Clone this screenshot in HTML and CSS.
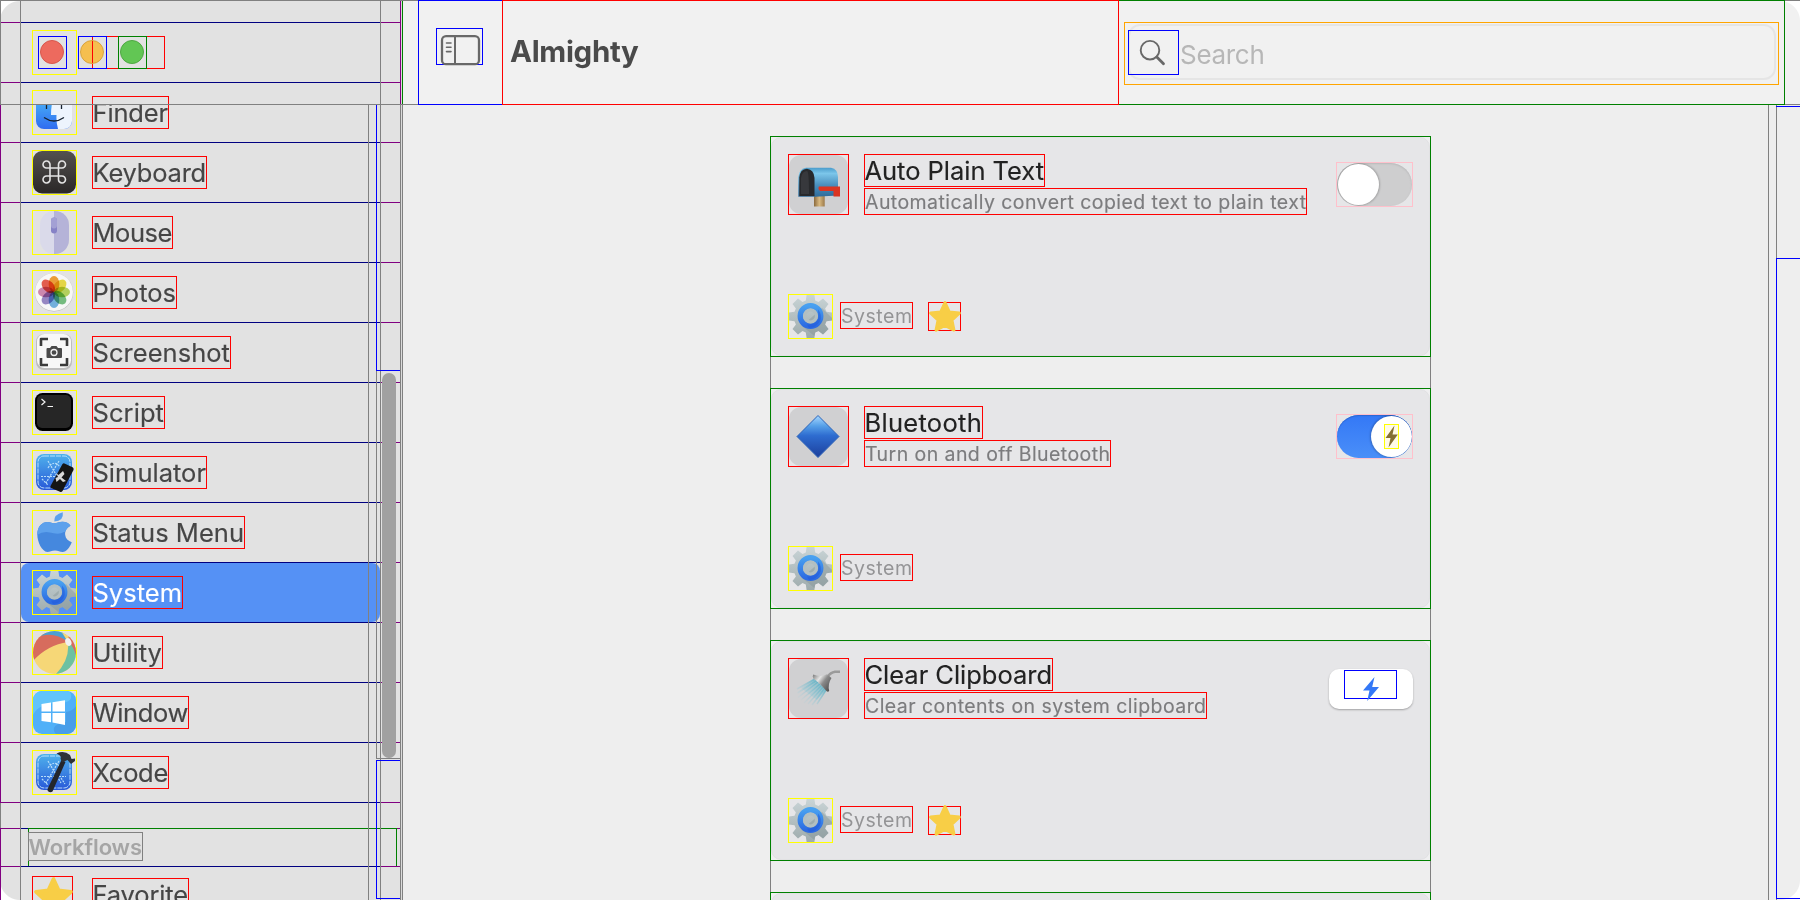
FILE: index.html
```html
<!DOCTYPE html>
<html lang="en">
<head>
<meta charset="utf-8">
<title>Almighty</title>
<link rel="stylesheet" href="styles.css">
</head>
<body>
<svg class="defs" width="0" height="0" aria-hidden="true">
  <defs>
    <linearGradient id="gGear" x1="0" y1="0" x2="0" y2="1"><stop offset="0" stop-color="#c9d4d6"/><stop offset="1" stop-color="#9eabad"/></linearGradient>
    <linearGradient id="gRing" x1="0" y1="0" x2="0" y2="1"><stop offset="0" stop-color="#48a0f0"/><stop offset="1" stop-color="#2c6be2"/></linearGradient>
    <linearGradient id="gBlue" x1="0" y1="0" x2="0" y2="1"><stop offset="0" stop-color="#4fb2ec"/><stop offset="1" stop-color="#2858d8"/></linearGradient>
    <linearGradient id="gFinder" x1="0" y1="0" x2="0" y2="1"><stop offset="0" stop-color="#4fc0f8"/><stop offset="1" stop-color="#2f6cf0"/></linearGradient>
    <linearGradient id="gKey" x1="0" y1="0" x2="0" y2="1"><stop offset="0" stop-color="#53514f"/><stop offset="1" stop-color="#2a2727"/></linearGradient>
    <linearGradient id="gDia" x1="0" y1="0" x2="0" y2="1"><stop offset="0" stop-color="#a8d8ff"/><stop offset=".25" stop-color="#559fe8"/><stop offset=".48" stop-color="#2e6cd0"/><stop offset="1" stop-color="#1c3f9c"/></linearGradient>
    <linearGradient id="gMail" x1="0" y1="0" x2="0" y2="1"><stop offset="0" stop-color="#4b9ccb"/><stop offset=".2" stop-color="#7cc6ea"/><stop offset=".6" stop-color="#4a8fbd"/><stop offset="1" stop-color="#2f6b9a"/></linearGradient>
    <linearGradient id="gPost" x1="0" y1="0" x2="1" y2="0"><stop offset="0" stop-color="#8a693d"/><stop offset=".5" stop-color="#d9b981"/><stop offset="1" stop-color="#9c7a4a"/></linearGradient>
    <linearGradient id="gSpray" gradientUnits="userSpaceOnUse" x1="34" y1="24" x2="15" y2="43"><stop offset="0" stop-color="#5fb1c4"/><stop offset="1" stop-color="#a6cfda" stop-opacity=".15"/></linearGradient>
    <linearGradient id="gMetal" x1="0" y1="0" x2="1" y2=".7"><stop offset="0" stop-color="#777"/><stop offset=".35" stop-color="#e4e4e4"/><stop offset=".6" stop-color="#8a8a8a"/><stop offset="1" stop-color="#555"/></linearGradient>
    <clipPath id="cBall"><circle cx="21.5" cy="21.5" r="21.5"/></clipPath>
    <clipPath id="cWin"><rect width="43" height="43" rx="9"/></clipPath>
    <clipPath id="cFinder"><rect x="3" y="2" width="36" height="36" rx="8"/></clipPath>
    <clipPath id="cMouse"><rect x="7" y="0" width="29" height="43" rx="14"/></clipPath>
    <clipPath id="cApple"><path d="M21.5 12.3C24 12.3 25.500 10.700 29.500 10.700C33 10.700 36 12.200 37.500 14.800C33 17.400 31.800 20.500 32.200 24C32.600 27.500 35 30 38.800 31.300C37 36.200 33.300 41 29.600 41C26.500 41 25.500 39.400 22 39.400C18.500 39.400 17.200 41 14.300 41C9 40.500 4.300 31 4.300 23.500C4.300 15.500 9 10.900 14.500 10.900C17.500 10.900 19.500 12.300 21.500 12.300Z"/></clipPath>

    <symbol id="gear" viewBox="0 0 43 43">
      <path d="M16.800 5.500L17.600 0H25.400L26.200 5.500L29.500 6.900L34 3.500L39.500 9L36.100 13.500L37.500 16.800L43 17.600V25.400L37.500 26.200L36.100 29.500L39.500 34L34 39.500L29.500 36.100L26.200 37.500L25.400 43H17.600L16.800 37.500L13.500 36.100L9 39.500L3.500 34L6.900 29.500L5.500 26.200L0 25.400V17.600L5.500 16.800L6.900 13.500L3.500 9L9 3.500L13.500 6.900Z" fill="url(#gGear)"/>
      <path d="M33 13L43 23V25.400L37.500 26.200L36.100 29.500L39.500 34L34 39.500L29.500 36.100L26.200 37.500L25.400 41L13 31Z" fill="#7f8d90" opacity=".38"/>
      <circle cx="21.500" cy="21" r="10.200" fill="none" stroke="url(#gRing)" stroke-width="5.500"/>
      <path d="M29 14.500Q34 20 30.500 27Q27 32.500 20 33L18 29.500Q27 30 29.300 23Z" fill="#2259da" opacity=".55"/>
      <circle cx="21.500" cy="21" r="6" fill="none" stroke="#b3bfc1" stroke-width="3.200"/>
    </symbol>
    <symbol id="star" viewBox="0 0 38 38">
      <path d="M19 2L24 13L36 14.400L27.200 22.600L29.600 34.500L19 29L8.400 34.500L10.800 22.600L2 14.400L14 13Z" fill="#f8ce46" stroke="#f8ce46" stroke-width="3.600" stroke-linejoin="round"/>
    </symbol>
    <symbol id="bolt" viewBox="0 0 16 24">
      <path d="M11.500 0L0 13.500H6.500L4.200 24L16 10H9.200Z"/>
    </symbol>
    <symbol id="finder" viewBox="0 0 43 43">
      <g clip-path="url(#cFinder)">
        <rect x="3" y="2" width="36" height="36" fill="url(#gFinder)"/>
        <path d="M22 2Q18 12 18 24H23.500Q23 31 25 38H39V2Z" fill="#edf4fd"/>
        <path d="M13.500 12V18M28.500 12V18M11 26.500Q21 33.500 31 26.500" fill="none" stroke="#17222f" stroke-width="1.300"/>
      </g>
    </symbol>
    <symbol id="keyboard" viewBox="0 0 43 43">
      <rect width="43" height="42.500" rx="9" fill="url(#gKey)"/>
      <path d="M17 17H25.500V25H17ZM17 17V13.600A3.500 3.500 0 1 0 13.500 17H17M25.500 17H29A3.500 3.500 0 1 0 25.500 13.600V17M25.500 25V28.400A3.500 3.500 0 1 0 29 25H25.500M17 25H13.500A3.500 3.500 0 1 0 17 28.400V25" fill="none" stroke="#e4e4e4" stroke-width="1.600"/>
    </symbol>
    <symbol id="mouse" viewBox="0 0 43 43">
      <g clip-path="url(#cMouse)"><rect x="7" width="14" height="43" fill="#dadaea"/><rect x="21" width="15" height="43" fill="#b5b3d8"/></g>
      <rect x="18" y="6.500" width="6" height="16" rx="3" fill="#8682c6"/><rect x="18" y="6.500" width="6" height="11" rx="3" fill="#a3a0d4"/>
    </symbol>
    <symbol id="photos" viewBox="0 0 43 43">
      <circle cx="21" cy="21.300" r="19.200" fill="#b8b8b8"/><circle cx="21" cy="21" r="19" fill="#f7f7f7"/>
      <g class="petals">
        <ellipse cx="21" cy="13" rx="5.300" ry="8" fill="#f2a33a"/>
        <ellipse cx="21" cy="13" rx="5.300" ry="8" fill="#ecdc48" transform="rotate(45 21 21)"/>
        <ellipse cx="21" cy="13" rx="5.300" ry="8" fill="#b9d660" transform="rotate(90 21 21)"/>
        <ellipse cx="21" cy="13" rx="5.300" ry="8" fill="#79c183" transform="rotate(135 21 21)"/>
        <ellipse cx="21" cy="13" rx="5.300" ry="8" fill="#77b5e3" transform="rotate(180 21 21)"/>
        <ellipse cx="21" cy="13" rx="5.300" ry="8" fill="#9a8bc9" transform="rotate(225 21 21)"/>
        <ellipse cx="21" cy="13" rx="5.300" ry="8" fill="#d28cb4" transform="rotate(270 21 21)"/>
        <ellipse cx="21" cy="13" rx="5.300" ry="8" fill="#ea6050" transform="rotate(315 21 21)"/>
      </g>
    </symbol>
    <symbol id="screenshot" viewBox="0 0 43 43">
      <rect x="3" y="3" width="36" height="36" rx="8" fill="#bdbdbd"/><rect x="4" y="3" width="34" height="34" rx="7.500" fill="#f7f7f7"/>
      <path d="M8 15V8H15M27 8H34V15M34 27V34H27M15 34H8V27" fill="none" stroke="#3a3a3a" stroke-width="2.600" stroke-linejoin="round"/>
      <path d="M14 17H17L18.500 15H23.500L25 17H28Q29 17 29 18V26Q29 27 28 27H14.500Q13.500 27 13.500 26V18Q13.500 17 14.500 17Z" fill="#4a4a4a"/>
      <circle cx="21" cy="21.500" r="3" fill="none" stroke="#f2f2f2" stroke-width="1.300"/>
    </symbol>
    <symbol id="script" viewBox="0 0 43 43">
      <rect x="2" y="2" width="38" height="38" rx="7.500" fill="#000"/><rect x="4" y="4" width="34" height="33" rx="5" fill="#262626"/>
      <path d="M8.500 8L12 11L8.500 14M14.500 15.500H20" fill="none" stroke="#f4f4f4" stroke-width="1.200"/>
    </symbol>
    <symbol id="blueprint" viewBox="0 0 43 43">
      <rect x="3" y="3" width="36" height="36" rx="8" fill="url(#gBlue)"/>
      <rect x="5" y="5" width="32" height="32" rx="6" fill="none" stroke="#c4e6ff" stroke-width=".9" stroke-dasharray="5 1"/>
      <path d="M15 10L28 32M26 10L13 32M8 25.500H33M15 17Q21 8 27 16M9 28L15 34M28 27L32 33" fill="none" stroke="#b8def9" stroke-width="1.200" stroke-dasharray="2 1"/>
    </symbol>
    <symbol id="simulator" viewBox="0 0 43 43">
      <use href="#blueprint" width="43" height="43"/>
      <path d="M31.500 12.500L40 16.500Q41 17.500 40.500 19L29.500 40Q28.500 41.300 27 40.700L18 37Q17 36 17.500 35L29.500 13Q30.500 12 31.500 12.500Z" fill="#151515"/>
      <path d="M23 22L25.500 24L30 20L31.500 23L28.500 26.500L33 30L30 31L27 28L23.500 31L22.500 27L25 26Z" fill="#d8d8d8"/>
    </symbol>
    <symbol id="apple" viewBox="0 0 43 43">
      <path d="M29.800 1.300Q31 10.300 21.300 10.600Q20.500 3.500 29.800 1.300Z" fill="#5da1ec"/>
      <g clip-path="url(#cApple)"><rect width="43" height="43" fill="#4588de"/><path d="M0 0H43V18Q35 20 31 21Q26 24 17 21.500Q10 20 4 24H0Z" fill="#5da1ec"/></g>
    </symbol>
    <symbol id="ball" viewBox="0 0 43 43">
      <g clip-path="url(#cBall)">
        <rect width="43" height="43" fill="#f6d777"/>
        <path d="M-1 31Q14 14 35 11L26 3L5 1L-2 14Z" fill="#d76c5d"/>
        <path d="M8 5Q22 1 35 11L38 8L28 0H12Z" fill="#4c9fd2"/>
        <path d="M35 11L28 0L40 8Z" fill="#f6d777"/>
        <path d="M35 11Q37 29 22 44H40L46 22L40 12Z" fill="#6dc1a2"/>
        <path d="M35 9Q41 17 43 24L46 12L36 4Z" fill="#d76c5d"/>
      </g>
      <ellipse cx="35.300" cy="11.200" rx="3" ry="4" fill="#f1f1f1" transform="rotate(-22 35 11)"/>
    </symbol>
    <symbol id="window" viewBox="0 0 43 43">
      <g clip-path="url(#cWin)">
        <rect width="43" height="43" fill="#50b0f8"/>
        <path d="M0 0H36Q40 4 37 9Q34 12 25 12Q6 12 0 24Z" fill="#62c4fb"/>
        <path d="M43 15Q40 20 33 21V31Q23 32 21 37Q20 41 24 44H43Z" fill="#489ee9"/>
      </g>
      <path d="M8.500 13L18 11.600V20.500H8.500ZM19.500 11.300L32 9.300V20.500H19.500ZM8.500 22H18V31.300L8.500 30ZM19.500 22H32V34L19.500 31.600Z" fill="#fff"/>
    </symbol>
    <symbol id="xcode" viewBox="0 0 43 43">
      <use href="#blueprint" width="43" height="43"/>
      <path d="M28.500 9L32.500 11L19.500 40.500Q17.500 42 15 40.300Q14 39 15 37Z" fill="#24272c"/>
      <path d="M23.500 2.500Q31 -1 37 4L38.500 8L42 7.500V10L38 13L34.500 9L29 11.500L27.500 7.500Q29 5 23.500 2.500Z" fill="#303337"/>
    </symbol>
    <symbol id="mailbox" viewBox="0 0 59 59">
      <rect x="25" y="40" width="10.700" height="11.500" fill="url(#gPost)"/>
      <path d="M17 12.700H42Q49 14 49 22V40.500L26 41.700H9.300V22Q10 14 17 12.700Z" fill="url(#gMail)"/>
      <path d="M10.300 41V22.500Q11 14 18 13.700Q25 14.500 25.500 23V41Z" fill="#28292c"/>
      <path d="M12 39V23Q13 16 18 16Q20 16 20 39Z" fill="#45474b" opacity=".5"/>
      <path d="M30 31.500H51V41.500H44.500V36H31Q28.500 33.500 30 31.500Z" fill="#da3522"/>
    </symbol>
    <symbol id="diamond" viewBox="0 0 59 59">
      <path d="M29 8.500L50 29.500L29 50.500L8 29.500Z" fill="url(#gDia)" stroke="#2a62b8" stroke-width="1" stroke-linejoin="round"/>
    </symbol>
    <symbol id="shower" viewBox="0 0 59 59">
      <path d="M26 20L8 30M27.500 21.500L8.500 34M29 23L9 38.500M31 25L12 41M32.500 26.500L15 44M34 28L19 45M35.500 29.500L23 46M37 31L28 45" stroke="url(#gSpray)" stroke-width="1.500" fill="none"/>
      <path d="M26 20L37 31L28 41L12 29Z" fill="url(#gSpray)" opacity=".7"/>
      <path d="M51 12.800H46Q41.500 13.500 38.500 18" fill="none" stroke="#9a9a9a" stroke-width="2.600"/>
      <path d="M24.300 15.500Q31 18.500 38 15.300L42.500 19Q38.500 25 40.200 32Q38.500 34 36.500 31Q30 23 24.500 20Q23 17 24.300 15.500Z" fill="url(#gMetal)"/>
    </symbol>
  </defs>
</svg>

<div class="window">
  <aside class="sidebar">
    <ul class="list">
      <li class="row"><span class="icon"></span><span class="label" style="width:73px"></span></li>
      <li class="row row-cut"><span class="icon"><svg><use href="#finder"/></svg></span><span class="label" style="width:77px"><b>Finder</b></span></li>
      <li class="row"><span class="icon"><svg><use href="#keyboard"/></svg></span><span class="label" style="width:115px"><b>Keyboard</b></span></li>
      <li class="row"><span class="icon"><svg><use href="#mouse"/></svg></span><span class="label" style="width:81px"><b>Mouse</b></span></li>
      <li class="row"><span class="icon"><svg><use href="#photos"/></svg></span><span class="label" style="width:85px"><b>Photos</b></span></li>
      <li class="row"><span class="icon"><svg><use href="#screenshot"/></svg></span><span class="label" style="width:139px"><b>Screenshot</b></span></li>
      <li class="row"><span class="icon"><svg><use href="#script"/></svg></span><span class="label" style="width:73px"><b>Script</b></span></li>
      <li class="row"><span class="icon"><svg><use href="#simulator"/></svg></span><span class="label" style="width:115px"><b>Simulator</b></span></li>
      <li class="row"><span class="icon"><svg><use href="#apple"/></svg></span><span class="label" style="width:153px"><b>Status Menu</b></span></li>
      <li class="row row-selected"><span class="icon"><svg><use href="#gear"/></svg></span><span class="label" style="width:91px"><b>System</b></span></li>
      <li class="row"><span class="icon"><svg><use href="#ball"/></svg></span><span class="label" style="width:71px"><b>Utility</b></span></li>
      <li class="row"><span class="icon"><svg><use href="#window"/></svg></span><span class="label" style="width:97px"><b>Window</b></span></li>
      <li class="row"><span class="icon"><svg><use href="#xcode"/></svg></span><span class="label" style="width:77px"><b>Xcode</b></span></li>
      <li class="row row-gap"></li>
      <li class="row row-section"><span class="section"><span class="section-label"><b>Workflows</b></span></span></li>
      <li class="row row-favorite"><span class="icon icon-star"><svg><use href="#star"/></svg></span><span class="label" style="width:97px"><b>Favorite</b></span></li>
    </ul>
    <div class="lights">
      <span class="light light-close"><i></i></span>
      <span class="light light-min"><i></i></span>
      <span class="light light-zoom"><i></i></span>
    </div>
    <div class="corner corner-tl"></div>
    <div class="corner corner-bl"></div>
    <div class="edge"></div>
    <div class="thumb"></div>
    <div class="v v-left"></div>
    <div class="v v-left-gap"></div>
    <div class="v v-inset"></div>
    <div class="v v-clip"></div>
    <div class="v v-track"></div>
    <div class="v v-right"></div>
    <div class="slot slot-top"></div>
    <div class="slot slot-bottom"></div>
    <div class="h h-thumb"></div>
    <div class="h h-head"></div>
  </aside>

  <main class="main">
    <header class="toolbar">
      <div class="tb-side"><span class="tb-icon"><svg width="47" height="40" viewBox="0 0 47 40"><rect x="6" y="8.200" width="37" height="28" rx="4" fill="none" stroke="#686868" stroke-width="2.300"/><path d="M19 8V36" stroke="#686868" stroke-width="2"/><path d="M10.500 15H15M10.500 19.300H15M10.500 23.600H15" stroke="#686868" stroke-width="1.600" stroke-linecap="round"/></svg></span></div>
      <div class="tb-title"><span class="title"><b>Almighty</b></span></div>
      <div class="tb-search">
        <div class="search-box">
          <div class="field"><span class="glass"><svg width="49" height="43" viewBox="0 0 49 43"><circle cx="21" cy="19.200" r="9.300" fill="none" stroke="#686868" stroke-width="1.900"/><path d="M27.800 26L34.500 32.800" stroke="#686868" stroke-width="2.800" stroke-linecap="round"/></svg></span><span class="placeholder"><b>Search</b></span></div>
        </div>
      </div>
      <div class="tb-end"></div>
    </header>
    <div class="content">
      <div class="column">
        <section class="card">
          <div class="card-top">
            <span class="emoji"><svg><use href="#mailbox"/></svg></span>
            <div class="texts"><span class="name" style="width:181px"><b>Auto Plain Text</b></span><span class="desc" style="width:443px"><b>Automatically convert copied text to plain text</b></span></div>
            <span class="switch"><i class="track"><i class="knob"></i></i></span>
          </div>
          <div class="card-foot"><span class="icon"><svg><use href="#gear"/></svg></span><span class="tag"><b>System</b></span><span class="fav"><svg><use href="#star"/></svg></span></div>
        </section>
        <section class="card">
          <div class="card-top">
            <span class="emoji"><svg><use href="#diamond"/></svg></span>
            <div class="texts"><span class="name" style="width:119px"><b>Bluetooth</b></span><span class="desc" style="width:247px"><b>Turn on and off Bluetooth</b></span></div>
            <span class="switch switch-on"><i class="track"><i class="knob"><svg class="knob-bolt" viewBox="0 0 13 23"><path d="M9.500 0.500L0.500 13H5.500L3.500 22.500L12.800 9.500H7.500Z"/></svg></i></i></span>
          </div>
          <div class="card-foot"><span class="icon"><svg><use href="#gear"/></svg></span><span class="tag"><b>System</b></span></div>
        </section>
        <section class="card">
          <div class="card-top">
            <span class="emoji"><svg><use href="#shower"/></svg></span>
            <div class="texts"><span class="name" style="width:189px"><b>Clear Clipboard</b></span><span class="desc" style="width:343px"><b>Clear contents on system clipboard</b></span></div>
            <span class="button"><span class="button-box"><svg><use href="#bolt"/></svg></span></span>
          </div>
          <div class="card-foot"><span class="icon"><svg><use href="#gear"/></svg></span><span class="tag"><b>System</b></span><span class="fav"><svg><use href="#star"/></svg></span></div>
        </section>
        <section class="card"></section>
      </div>
      <div class="corner corner-br"></div>
      <div class="m m-clip"></div>
      <div class="m m-track"></div>
      <div class="mslot mslot-top"></div>
      <div class="mslot mslot-bottom"></div>
    </div>
  </main>
</div>
<script src="fit.js"></script>
</body>
</html>
```
FILE: styles.css
```css
* { box-sizing: border-box; }
body { margin: 0; background: #fff; font-family: Inter, "Liberation Sans", sans-serif; overflow: hidden; }
b, i { font: inherit; font-style: normal; }
b { display: inline-block; white-space: pre; }
svg { display: block; }
.defs { position: absolute; }

.window { display: flex; position: relative; width: 1800px; height: 900px; overflow: hidden; background: #eee; }
.corner { position: absolute; width: 20px; height: 20px; }
.corner-tl { left: 0; top: 1px; background: radial-gradient(circle at 100% 100%, transparent 19.500px, #fff 20.500px); }
.corner-bl { left: 0; bottom: 0; background: radial-gradient(circle at 100% 0, transparent 19.500px, #fff 20.500px); }
.corner-br { right: 0; bottom: 0; background: radial-gradient(circle at 0 0, transparent 19.500px, #fff 20.500px); }

/* Sidebar */
.sidebar { position: relative; width: 403px; height: 900px; flex: none; padding-top: 22px; background: #e2e2e2; overflow: hidden; }
.list { list-style: none; margin: 0; padding: 0; width: 401px; }
.row { display: flex; height: 60px; padding: 8px 0 0 32px;
  background: linear-gradient(to right, #800080 20px, #000080 20px, #000080 380px, #800080 380px) top left / 100% 1px no-repeat; }
.icon { width: 45px; height: 45px; border: 1px solid #ff0; flex: none; }
.icon svg { width: 43px; height: 43px; }
.label { height: 33px; margin: 6px 0 0 15px; border: 1px solid #f00; font-size: 25.500px; line-height: 31px; color: #464646; -webkit-text-stroke: .15px; }
.label b, .name b { margin-left: -.5px; }
.row-cut svg { clip-path: inset(14px 0 0 0); }
.row-cut b { clip-path: inset(8px 0 0 0); }
.row-selected { position: relative; color: #fff; }
.row-selected::before { content: ""; position: absolute; left: 21px; top: 1px; width: 359px; height: 59px; border-radius: 8px; background: #5591f5; }
.row-selected > * { position: relative; }
.row-selected .label { color: #fff; }
.row-gap { height: 26px; }
.row-section { height: 38px; padding: 0 0 0 28px; }
.section { display: block; width: 369px; height: 38px; border: 1px solid #008000; border-bottom: 0; }
.section-label { display: block; width: 115px; height: 29px; margin: 3px 0 0 -1px; border: 1px solid #808080; font-size: 22px; line-height: 28px; font-weight: 600; color: #a5a5a5; }
.section-label b { margin-left: -.5px; }
.row-favorite { padding-top: 10px; }
.icon-star { width: 41px; border-color: #f00; }
.icon-star svg { width: 39px; height: 39px; margin-left: 1px; }
.row-favorite .label { margin: 2px 0 0 19px; }
.petals ellipse { mix-blend-mode: multiply; }

.lights { position: absolute; left: 38px; top: 36px; display: flex; gap: 11px; }
.light { width: 29px; height: 33px; padding: 3px 1px; border: 1px solid #00f; }
.light i { display: block; width: 24px; height: 24px; border-radius: 50%; border: 1px solid; }
.light-close i { background: #ed6a5e; border-color: #d8574c; }
.light-min i { background: linear-gradient(to right, #f5bf4f 11px, #f00 11px, #f00 12px, #f5bf4f 12px); border-color: #d9a33c; }
.light-zoom { border-color: #008000; }
.light-zoom i { background: #62c654; border-color: #4fa843; }

.edge { position: absolute; left: 401px; top: 0; width: 2px; height: 900px; background: linear-gradient(to right, #dadada 1px, #808080 1px); }
.edge::before { content: ""; position: absolute; left: 1px; top: 0; width: 1px; height: 105px; background: #008000; }
.thumb { position: absolute; left: 382px; top: 373px; width: 14px; height: 385px; border-radius: 7px; background: #a1a1a1; }
.v { position: absolute; width: 1px; top: 0; bottom: 0; background: #808080; }
.v-left { left: 0; background: linear-gradient(#808080 104px, #800080 104px); }
.v-left-gap { left: 0; top: 803px; height: 25px; bottom: auto; }
.v-inset { left: 20px; }
.v-clip { left: 368px; top: 105px; }
.v-track { left: 376px; top: 370px; height: 389px; bottom: auto; }
.v-right { left: 380px; }
.slot { position: absolute; left: 376px; width: 25px; border: 1px solid #00f; border-right: 0; }
.slot-top { top: 104px; height: 267px; border-top: 0; }
.slot-bottom { top: 760px; height: 139px; }
.h { position: absolute; height: 1px; background: #808080; }
.h-thumb { left: 376px; top: 758px; width: 25px; }
.h-head { left: 0; top: 104px; width: 403px; }
.sidebar::after { content: ""; position: absolute; left: 400px; top: 0; width: 1px; height: 900px; background: linear-gradient(#800080 104px, #808080 104px); }
.sidebar::before { content: ""; position: absolute; left: 0; top: 0; width: 403px; height: 1px; background: #808080; z-index: 2; }

/* Toolbar */
.main { flex: 1; height: 900px; display: flex; flex-direction: column; }
.toolbar { display: flex; height: 105px; padding-left: 15px; background: linear-gradient(#808080, #808080) top / 100% 1px no-repeat, linear-gradient(#808080, #808080) bottom / 100% 1px no-repeat, #f1f1f1; }
.tb-side { width: 84px; border: 1px solid #00f; border-right: 0; padding: 27px 0 0 17px; }
.tb-icon { display: block; width: 47px; height: 37px; border: 1px solid #00f; }
.tb-icon svg { margin: -1px; overflow: visible; }
.tb-title { width: 617px; border: 1px solid #f00; padding: 32px 0 0 7px; }
.title { display: block; width: 128px; font-size: 29.500px; line-height: 36px; font-weight: 700; color: #4a4a4a; }
.tb-search { width: 666px; border: 1px solid #008000; border-left: 0; padding: 21px 0 0 5px; }
.search-box { width: 655px; height: 63px; border: 1px solid #ffa500; padding: 1px 2px 0 3px; }
.field { display: flex; width: 648px; height: 56px; border: 2px solid #e5e5e5; border-radius: 12px; }
.glass { width: 51px; height: 45px; margin: 4px 0 0 -2px; border: 1px solid #00f; }
.placeholder { width: 84px; margin: 12px 0 0 1px; font-size: 26px; line-height: 34px; color: #b7b7b7; }
.tb-end { flex: 1; margin: 1px 0; background: radial-gradient(circle at 0 100%, transparent 19.500px, #fff 20.500px) top right / 20px 20px no-repeat; }

/* Content */
.content { position: relative; flex: 1; padding: 31px 0 0 367px; overflow: hidden; background: #eee; }
.column { display: flex; flex-direction: column; gap: 31px; width: 661px; background: linear-gradient(to right, #808080 1px, transparent 1px, transparent 660px, #808080 660px); }
.card { display: flex; flex-direction: column; justify-content: space-between; flex: none; height: 221px; padding: 17px; border: 1px solid #008000; background: #efeff0; position: relative; z-index: 0; }
.card::before { content: ""; position: absolute; inset: 0; z-index: -1; border: 1px solid #e1e1e3; border-radius: 10px; background: #e6e6e8; }
.card-top { display: flex; height: 61px; }
.emoji { width: 61px; height: 61px; border: 1px solid #f00; background: #e6e6e8; flex: none; }
.emoji svg { width: 59px; height: 59px; border-radius: 12px; background: #d0d0d2; }
.texts { flex: 1; display: flex; flex-direction: column; align-items: flex-start; gap: 1px; padding-left: 15px; }
.name { height: 33px; border: 1px solid #f00; font-size: 25.500px; line-height: 31px; color: #222; -webkit-text-stroke: .15px; }
.desc { height: 27px; border: 1px solid #f00; font-size: 19.500px; line-height: 26px; color: #7c7c7e; -webkit-text-stroke: .15px; }
.switch { width: 77px; height: 45px; margin-top: 8px; border: 1px solid #ffc0cb; }
.track { display: block; width: 75px; height: 43px; padding: 1px 1px 0 1px; border-radius: 22px; background: #cececf; overflow: hidden; box-shadow: inset 0 1px 2px #b9b9ba; }
.knob { display: block; width: 41px; height: 41px; border-radius: 50%; background: #fff; box-shadow: 0 0 2px 1px rgba(0,0,0,.22); }
.switch-on .track { background: linear-gradient(#3478f6, #4a8ff8); box-shadow: inset 0 1px 1px #2c66d2; }
.switch-on .knob { margin-left: 33px; padding: 8px 0 0 13px; }
.knob-bolt { width: 15px; height: 25px; border: 1px solid #ff0; fill: #857034; background: #fffbe6; }
.button { width: 84px; height: 40px; margin: 11px 0 0; padding: 1px 0 0 15px; border-radius: 10px; background: #fff; box-shadow: 0 1px 2px rgba(0,0,0,.3); }
.button-box { display: block; width: 53px; height: 29px; border: 1px solid #00f; }
.button-box svg { width: 16px; height: 24px; margin: 6px 0 0 18px; fill: #3478f6; overflow: visible; position: relative; }
.card-foot { display: flex; height: 45px; }
.tag { width: 73px; height: 27px; margin: 8px 0 0 7px; border: 1px solid #f00; font-size: 19.500px; line-height: 26px; color: #949496; }
.fav { width: 33px; height: 29px; margin: 8px 0 0 15px; border: 1px solid #f00; }
.fav svg { width: 32px; height: 32px; margin-top: -2px; }

.m { position: absolute; top: 0; bottom: 0; width: 1px; background: #808080; }
.m-clip { left: 1365px; }
.m-track { left: 1373px; }
.mslot { position: absolute; left: 1373px; width: 24px; }
.mslot-top { top: 1px; height: 1px; background: #00f; }
.mslot-bottom { top: 153px; height: 641px; border: 1px solid #00f; border-right: 0; }
```
FILE: fit.js
```js
// Spreads each label's letters so the text fills its measured box.
document.querySelectorAll('b').forEach(function (el) {
  var box = el.parentElement;
  var target = (box.clientWidth || box.getBoundingClientRect().width) + 0.5;
  var gap = (target - el.getBoundingClientRect().width) / el.textContent.length;
  el.style.letterSpacing = gap.toFixed(3) + 'px';
});
```
